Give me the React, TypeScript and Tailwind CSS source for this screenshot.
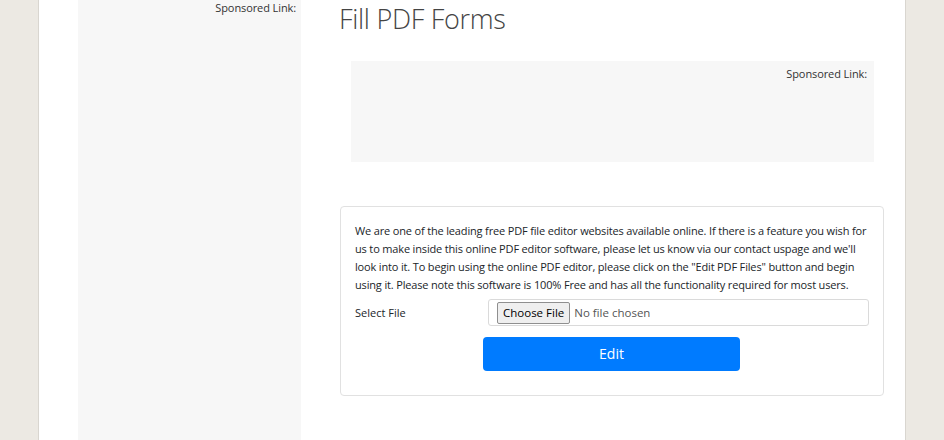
import React from "react";

export default function App() {
  const font = { fontFamily: '"Open Sans", "Noto Sans", Arial, sans-serif' };
  return (
    <div className="w-[944px] h-[440px] overflow-hidden bg-[#ece9e3]" style={font}>
      <div className="ml-[38px] w-[868px] h-[440px] bg-white border-x border-[#d9d6d0] flex">
        <div className="w-[39px] shrink-0" />
        <div className="w-[223px] shrink-0 bg-[#f7f7f7] h-full">
          <div className="text-right pr-[5px] pt-[1px] text-[11px] leading-[14px] text-[#333] tracking-[-0.1px]">Sponsored Link:</div>
        </div>
        <div className="w-[604px] shrink-0 min-w-0 pl-[39px] pr-[21px]">
          <h1 className="-ml-[1px] text-[27px] leading-[36px] font-light text-[#444] mt-[1px] tracking-[-0.3px]">Fill PDF Forms</h1>
          <div className="ml-[11px] mr-[10px] mt-[24px] h-[101px] bg-[#f7f7f7]">
            <div className="text-right pr-[7px] pt-[6px] text-[11px] leading-[14px] text-[#333] tracking-[-0.1px]">Sponsored Link:</div>
          </div>
          <div className="mt-[44px] h-[190px] border border-[#e1e1e1] rounded-[4px] px-[14px] pt-[15px]">
            <p className="text-[11px] leading-[18px] text-[#212529] whitespace-nowrap tracking-[-0.16px]">
              <span className="block">We are one of the leading free PDF file editor websites available online. If there is a feature you wish for</span>
              <span className="block">us to make inside this online PDF editor software, please let us know via our contact uspage and we'll</span>
              <span className="block">look into it. To begin using the online PDF editor, please click on the "Edit PDF Files" button and begin</span>
              <span className="block">using it. Please note this software is 100% Free and has all the functionality required for most users.</span>
            </p>
            <div className="flex items-center mt-[5px]">
              <div className="w-[133px] shrink-0 text-[11px] text-[#212529] pt-[1px]">Select File</div>
              <div className="flex-1 h-[27px] border border-[#dadada] rounded-[3px] flex items-center pl-[8px]">
                <span className="h-[22px] px-[5px] flex items-center bg-[#efefef] border border-[#8f8f8f] rounded-[2px] text-[11.5px] text-black">Choose File</span>
                <span className="ml-[4px] text-[11.5px] text-[#555]">No file chosen</span>
              </div>
            </div>
            <div className="flex mt-[11px]">
              <div className="w-[128px] shrink-0" />
              <button className="w-[257px] h-[34px] bg-[#007bff] rounded-[4px] text-white text-[14px] leading-[34px] text-center">Edit</button>
            </div>
          </div>
        </div>
      </div>
    </div>
  );
}
